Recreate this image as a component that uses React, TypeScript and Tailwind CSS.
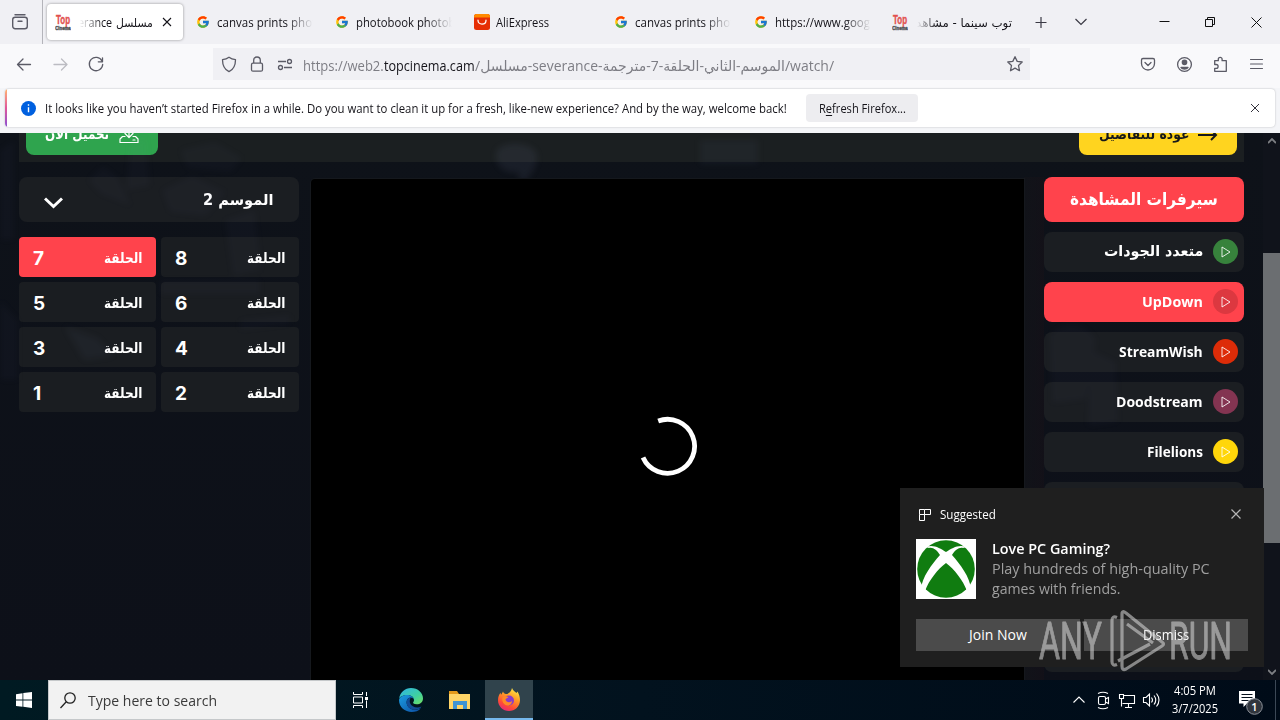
import { useLayoutEffect, useRef } from "react";
import type { ReactNode } from "react";
import { FcGoogle } from "react-icons/fc";

/** One line of text, stretched horizontally to fill the width given by its class. */
function Fit({ className, rtl, children }: { className: string; rtl?: boolean; children: ReactNode }) {
  const box = useRef<HTMLDivElement>(null);
  const line = useRef<HTMLSpanElement>(null);
  useLayoutEffect(() => {
    if (!box.current || !line.current) return;
    const k = box.current.clientWidth / line.current.offsetWidth;
    line.current.style.transform = `scaleX(${k})`;
  }, []);
  return (
    <div ref={box} dir="ltr" className={`flex shrink-0 whitespace-nowrap ${className}`}>
      <span ref={line} dir={rtl ? "rtl" : "ltr"} className="block shrink-0 origin-left">
        {children}
      </span>
    </div>
  );
}

const ARABIC = "font-['DejaVu_Sans',sans-serif]";

function TopCinemaIcon() {
  return (
    <svg width="16" height="17" viewBox="0 0 16 17" className="shrink-0">
      <text x="1" y="10" textLength="14" lengthAdjust="spacingAndGlyphs" fontFamily="Liberation Sans" fontWeight="700" fontSize="12" stroke="#e2504e" strokeWidth=".4" fill="#e2504e">Top</text>
      <text x="0.3" y="15.5" textLength="15.4" lengthAdjust="spacingAndGlyphs" fontFamily="Liberation Sans" fontWeight="700" fontSize="6" stroke="#55565c" strokeWidth=".5" fill="#55565c">Cinema</text>
    </svg>
  );
}

function GoogleIcon() {
  return <span className="flex w-4 shrink-0 justify-center"><FcGoogle size={14} /></span>;
}

function Tab({ icon, children }: { icon: ReactNode; children: ReactNode }) {
  return (
    <div className="flex h-9 w-[139.4px] shrink-0 items-center gap-1.5 pl-[9px]">
      {icon}
      <div className="w-24 overflow-hidden pt-0.5 [mask-image:linear-gradient(to_right,black_72%,transparent_100%)]">{children}</div>
    </div>
  );
}

function TabStrip() {
  return (
    <div className="flex h-11 items-center bg-[#f0f0f4] text-[12px] leading-5 text-[#15141a]">
      <div className="flex h-11 w-[43px] shrink-0 items-center justify-center border-r border-[#b4b4ba] pr-0.5">
        <svg width="18" height="18" viewBox="0 0 18 18" fill="none" stroke="#5b5b66" strokeWidth="1.4" strokeLinecap="round">
          <path d="M4 1.7h10" />
          <rect x="1.7" y="4.2" width="14.6" height="11.6" rx="2.5" />
          <path d="M7 8.3h4" />
        </svg>
      </div>
      <div className="ml-1 flex h-9 w-[136px] shrink-0 items-center rounded bg-white pl-2 shadow-[0_0_3px_rgba(0,0,0,0.4)]">
        <TopCinemaIcon />
        <div className="ml-[7px] flex items-center justify-end pt-0.5 [mask-image:linear-gradient(to_right,transparent_2%,black_32%)]">
          <Fit className="w-[34px]">erance</Fit>
          <Fit rtl className={`ml-1 w-[37px] ${ARABIC}`}>مسلسل</Fit>
        </div>
        <svg width="10" height="10" viewBox="0 0 10 10" className="ml-[9px] shrink-0" stroke="#15141a" strokeWidth="1.1"><path d="M1 1l8 8M9 1L1 9" /></svg>
      </div>
      <div className="ml-[3px] flex shrink-0">
        <Tab icon={<GoogleIcon />}><Fit className="w-[99px]">canvas prints phot</Fit></Tab>
        <Tab icon={<GoogleIcon />}><Fit className="w-[99px]">photobook photob</Fit></Tab>
        <Tab
          icon={
            <svg width="16" height="16" viewBox="0 0 16 16" className="shrink-0">
              <rect width="16" height="16" rx="2.5" fill="#e62e04" />
              <path d="M0 3.500v-1A2.500 2.500 0 0 1 2.500 0h11A2.500 2.500 0 0 1 16 2.500v1z" fill="#ff8a00" />
              <path d="M4 6.200c0 5.200 8 5.200 8 0" fill="none" stroke="#fff" strokeWidth="1.300" strokeLinecap="round" />
            </svg>
          }
        >
          <Fit className="w-[53px]">AliExpress</Fit>
        </Tab>
        <Tab icon={<GoogleIcon />}><Fit className="w-[99px]">canvas prints phot</Fit></Tab>
        <Tab icon={<GoogleIcon />}><Fit className="w-[104px]">https://www.google</Fit></Tab>
        <div className="flex h-9 w-[139px] items-center gap-2 pl-[9px]">
          <TopCinemaIcon />
          <div className="pt-0.5 [mask-image:linear-gradient(to_right,transparent_1%,black_22%)]">
            <Fit rtl className={`w-24 ${ARABIC}`}>توب سينما - مشاهد</Fit>
          </div>
        </div>
      </div>
      <svg width="250" height="44" viewBox="1022 0 250 44" className="-ml-px shrink-0" fill="none" stroke="#3a3944" strokeWidth="1.200">
        <path d="M1036.500 22.500h11M1042 17v11" />
        <path d="M1076.500 19l5.500 5.500 5.500-5.500" />
        <g stroke="#111" strokeWidth="1">
          <path d="M1160.500 21.500h10" />
          <path d="M1206.500 19.500h7v7h-7zM1208.500 19.500v-2h7v7h-2" />
          <path d="M1252.500 17.500l10 10M1262.500 17.500l-10 10" />
        </g>
      </svg>
    </div>
  );
}

function NavBar() {
  return (
    <div className="flex h-11 items-start bg-[#f9f9fb] pt-1">
      <svg width="213" height="32" viewBox="0 48 213 32" className="shrink-0" fill="none" stroke="#5b5b66" strokeWidth="1.300" strokeLinecap="round" strokeLinejoin="round">
        <path d="M30.500 64.500H17.500M23 59l-5.500 5.500 5.500 5.500" />
        <path d="M54 64.500h13M61.500 59l5.500 5.500-5.500 5.500" stroke="#bcbcc2" />
        <path d="M102 61a6.700 6.700 0 1 0 .7 3.500M102.500 57.800v4h-4.200" />
      </svg>
      <div className="flex h-8 w-[817px] shrink-0 items-center bg-[#f0f0f4] text-[14px] text-[#7d7d84]">
        <svg width="90" height="32" viewBox="213 48 90 32" className="shrink-0" fill="none" stroke="#5b5b66" strokeWidth="1.300" strokeLinejoin="round">
          <path d="M229 57.200c2 1.500 4.300 2.200 6.500 2.500 0 5.500-1.500 9.500-6.500 12-5-2.500-6.500-6.500-6.500-12 2.200-.3 4.500-1 6.500-2.500z" />
          <rect x="251.500" y="63.200" width="11" height="8" rx="1.500" />
          <path d="M253.700 63v-2.700a3.300 3.300 0 0 1 6.600 0V63" />
          <path d="M278 61.500h8M284 67.500h8" />
          <circle cx="289.500" cy="61.500" r="2" />
          <circle cx="280.500" cy="67.500" r="2" />
        </svg>
        <Fit className="w-[81px] pt-0.5">https://web2.</Fit>
        <Fit className="w-[91px] pt-0.5 text-[#15141a]">topcinema.cam</Fit>
        <Fit className="w-[359px] pt-0.5 font-['Open_Sans','DejaVu_Sans',sans-serif]">/مسلسل-severance-الموسم-الثاني-الحلقة-7-مترجمة/watch/</Fit>
        <svg width="18" height="18" viewBox="0 0 18 18" className="ml-[172px] shrink-0" fill="none" stroke="#5b5b66" strokeWidth="1.300" strokeLinejoin="round">
          <path d="M9 1.700l2.200 4.700 5 .6-3.700 3.500 1 5.200L9 13.100l-4.500 2.600 1-5.200L1.800 7l5-.6z" />
        </svg>
      </div>
      <svg width="130" height="32" viewBox="1138 48 130 32" className="ml-[108px] shrink-0" fill="none" stroke="#5b5b66" strokeWidth="1.300" strokeLinecap="round" strokeLinejoin="round">
        <path d="M1143 58.500h10a1.500 1.500 0 0 1 1.500 1.500v3.500a6.500 6.500 0 0 1-13 0V60a1.500 1.500 0 0 1 1.500-1.500zM1145 62.500l3 3 3-3" />
        <circle cx="1184.500" cy="64.500" r="6.900" />
        <circle cx="1184.500" cy="62.300" r="2.200" fill="#5b5b66" />
        <path d="M1181 67.500h7c-1.500 2-5.500 2-7 0z" fill="#5b5b66" />
        <path d="M1214.700 60.700h3.600v-1.500a1.900 1.900 0 0 1 3.800 0v1.500h4.200v10.600h-11.600v-3h1.500a1.900 1.900 0 0 0 0-3.800h-1.500z" />
        <path d="M1250.500 59.500h12M1250.500 64h12M1250.500 68.500h12" strokeWidth="1.100" />
      </svg>
    </div>
  );
}

function InfoBar() {
  return (
    <div className="h-[45px] bg-[#f4f5f8] px-[5px] pt-px">
      <div className="flex h-[38px] items-center overflow-hidden rounded bg-white text-[12px] text-[#15141a] shadow-[0_0_2px_rgba(0,0,0,0.25)]">
        <div className="h-full w-0.5 bg-linear-to-b from-[#ffb26b] via-[#e0559a] to-[#8b4cd0]" />
        <svg width="15" height="15" viewBox="0 0 15 15" className="ml-[14px] shrink-0">
          <circle cx="7.500" cy="7.500" r="7.500" fill="#0060df" />
          <path d="M7.500 3.200v1.500M7.500 6.300v5" stroke="#fff" strokeWidth="1.400" />
        </svg>
        <Fit className="ml-[9px] w-[742px] pt-px">It looks like you haven’t started Firefox in a while. Do you want to clean it up for a fresh, like-new experience? And by the way, welcome back!</Fit>
        <div className="ml-[19px] flex h-7 w-28 items-center justify-center rounded-sm bg-[#ededf0]">
          <Fit className="w-[87px] pt-px">R<span className="underline underline-offset-2">e</span>fresh Firefox...</Fit>
        </div>
        <svg width="8" height="8" viewBox="0 0 8 8" className="ml-auto mr-4" stroke="#33323c"><path d="M0 0l8 8M8 0L0 8" /></svg>
      </div>
    </div>
  );
}

const episodes = [7, 8, 5, 6, 3, 4, 1, 2];

function Seasons() {
  return (
    <div className="w-[280px] shrink-0">
      <div className="flex h-[45px] items-center justify-between rounded-lg bg-[#1b1e22] pl-[25px] pr-[26px]">
        <svg width="19" height="12" viewBox="0 0 19 12" className="mt-1.5" fill="none" stroke="#fff" strokeWidth="3"><path d="M1 1.500l8.500 8 8.500-8" /></svg>
        <Fit rtl className={`w-[70px] pt-px text-[15px] font-bold text-white ${ARABIC}`}>الموسم 2</Fit>
      </div>
      <div className="mt-[15px] grid grid-cols-[137px_138px] gap-[5px]">
        {episodes.map((n) => (
          <div key={n} className={`flex h-10 items-center justify-between rounded pl-3.5 pr-3.5 text-white ${n === 7 ? "bg-[#ff434c]" : "bg-[#1a1d21]"}`}>
            <span className="pt-[3px] font-['Inter',sans-serif] text-[19px] font-bold leading-none">{n}</span>
            <Fit rtl className={`w-[38px] pt-[3px] text-[14px] font-bold ${ARABIC}`}>الحلقة</Fit>
          </div>
        ))}
      </div>
    </div>
  );
}

const servers = [
  { name: "متعدد الجودات", width: "w-[99px]", circle: "bg-[#37823c]", arabic: true },
  { name: "UpDown", width: "w-[61px]", circle: "bg-[#dc3840]", active: true },
  { name: "StreamWish", width: "w-[84px]", circle: "bg-[#dd2c08]" },
  { name: "Doodstream", width: "w-[87px]", circle: "bg-[#833451]" },
  { name: "Filelions", width: "w-[56px]", circle: "bg-[#ffd60a]" },
];

function Servers() {
  return (
    <div className="flex w-[200px] shrink-0 flex-col gap-2.5">
      <div className="flex h-[45px] shrink-0 items-center justify-center rounded-lg bg-[#ff434c] text-[17px] text-white">
        <Fit rtl className={`w-[148px] font-bold ${ARABIC}`}>سيرفرات المشاهدة</Fit>
      </div>
      {servers.map((s) => (
        <div key={s.name} className={`flex h-10 shrink-0 items-center justify-end gap-2.5 rounded-lg pb-px pr-1.5 text-[15px] font-bold text-white ${s.active ? "bg-[#ff434c]" : "bg-[#1b1e22]"}`}>
          {s.arabic ? <Fit rtl className={`${s.width} ${ARABIC}`}>{s.name}</Fit> : <Fit className={s.width}>{s.name}</Fit>}
          <span className={`flex size-[25px] items-center justify-center rounded-full ${s.circle}`}>
            <svg width="10" height="12" viewBox="0 0 10 12" fill="none" stroke="#fff" strokeOpacity=".85"><path d="M1 1l8 5-8 5z" /></svg>
          </span>
        </div>
      ))}
      {[0, 1, 2, 3].map((i) => <div key={i} className="h-10 shrink-0 rounded-lg bg-[#1b1e22]" />)}
    </div>
  );
}

function Backdrop() {
  return (
    <svg width="1263" height="547" viewBox="0 133 1263 547" className="pointer-events-none absolute left-0 top-0 blur-[3px]" fill="#7d86b0" fillOpacity=".03">
      <path d="M88 180l15-14 14 10 14 30-30-12zM162 190l30-14 34 16-20 24-36-4zM180 150l35-8 28 16-12 14-44-4z" />
      <path d="M497 150c8-10 42-8 40 8 0 10-8 18-14 26l-6-12c-14 2-24-8-20-22z" fillOpacity=".1" />
      <path d="M700 140h58v24h-58zM64 326l34 12 16 18-30 4z" fillOpacity=".06" />
      <path d="M1050 335c14-16 34-14 46 4l-10 60-34 4zM1090 350l26 12 2 60-30 4z" />
      <path d="M225 220l30-10 6 60-28 6zM160 280h100v14H160zM130 146l16-10 4 50-24 4zM240 320l50-5v9l-50 6z" />
      <path d="M0 150l14-10v100H0zM0 300l18 20v60H0z" />
    </svg>
  );
}

function Page() {
  return (
    <div className="flex h-[547px]">
      <div className="relative h-[547px] w-[1263px] shrink-0 overflow-hidden bg-linear-to-b from-[#0e1219] to-[#0d1019] pl-[19px]">
        <div className="-mt-5 flex h-[49px] w-[1225px] items-end justify-between bg-[#1b1f21] px-[7px] pb-[7px]">
          <div className="flex h-10 w-[132px] items-center rounded-lg bg-[#2fa44e] pl-[19px] text-white">
            <Fit rtl className={`w-[64px] pb-0.5 text-[14px] font-bold ${ARABIC}`}>تحميل الآن</Fit>
            <svg width="20" height="18" viewBox="0 0 20 18" className="ml-2.5" fill="none" stroke="#fff" strokeWidth="1.200" strokeLinecap="round" strokeLinejoin="round">
              <path d="M10 1v10M6 7.500l4 4 4-4M6 10.500H3.500L1 13v3.500h18V13l-2.500-2.500H14M14 14h2" />
            </svg>
          </div>
          <div className="flex h-10 w-[158px] items-center rounded-lg bg-[#ffd41f] pl-5 text-[#16181a]">
            <Fit rtl className={`w-[90px] pb-0.5 text-[14px] font-bold ${ARABIC}`}>عودة للتفاصيل</Fit>
            <svg width="20" height="12" viewBox="0 0 20 12" className="ml-[9px]" fill="none" stroke="#16181a" strokeWidth="2"><path d="M0 6h18M13 1l5 5-5 5" /></svg>
          </div>
        </div>
        <div className="flex pt-[15px]">
          <Seasons />
          <div className="relative z-10 ml-3 mt-0.5 flex h-[520px] w-[713px] shrink-0 items-start justify-center rounded-tl bg-black shadow-[0_0_0_1px_#15181d]">
            <svg width="60" height="60" viewBox="-30 -30 60 60" className="mt-[237px]" fill="none" stroke="#fff" strokeWidth="4.800">
              <path d="M-9.800 -25A27 27 0 1 1 -25 11.500" />
            </svg>
          </div>
          <div className="w-5 shrink-0 bg-linear-to-r from-[#111319] to-[#1a1117]/40" />
          <Servers />
        </div>
        <Backdrop />
      </div>
      <div className="flex w-[17px] flex-col items-center justify-between bg-[#10131b] pt-[5px] pb-[5px]">
        <svg width="8" height="6" viewBox="0 0 8 6" fill="none" stroke="#7d7f83" strokeWidth="1.800"><path d="M0 5l4-4 4 4" /></svg>
        <div className="mt-[109px] h-[290px] w-full shrink-0 bg-[#6b6e71]" />
        <svg width="8" height="6" viewBox="0 0 8 6" className="mt-auto" fill="none" stroke="#7d7f83" strokeWidth="1.800"><path d="M0 1l4 4 4-4" /></svg>
      </div>
    </div>
  );
}

function Taskbar() {
  return (
    <div className="flex h-10 items-center bg-linear-to-r from-[#001a22] via-[#02121e] to-[#000b18] text-white">
      <div className="flex w-12 shrink-0 justify-center">
        <svg width="16" height="16" viewBox="0 0 16 16" fill="#fff"><path d="M0 2.200l6.500-1v6.400H0zM7.300 1.100L16 0v7.600H7.300zM0 8.400h6.500v6.400L0 13.900zM7.300 8.400H16V16l-8.700-1.200z" /></svg>
      </div>
      <div className="flex h-10 w-72 shrink-0 items-center border border-[#c5c8ca] bg-[#f2f2f2] pl-[11px]">
        <svg width="16" height="17" viewBox="0 0 16 17" fill="none" stroke="#222" strokeWidth="1.300"><circle cx="10" cy="6" r="5.200" /><path d="M6.300 9.800L.5 16" /></svg>
        <Fit className="ml-3 w-[129px] text-[15px] text-[#3a3a3a]">Type here to search</Fit>
      </div>
      <div className="flex w-12 shrink-0 justify-center">
        <svg width="16" height="16" viewBox="0 0 16 16" fill="none" stroke="#fff"><path d="M1.500 0v2.500h9V0M1.500 16v-2.500h9V16M1.500 5h9v6h-9zM14.500 0v4M14.500 8.500V16" /><path d="M13 5h3v3h-3z" fill="#fff" stroke="none" /></svg>
      </div>
      <div className="flex w-[53px] shrink-0 justify-center">
        <svg width="24" height="24" viewBox="0 0 24 24">
          <defs>
            <linearGradient id="edgeTop" x1="0" y1="0" x2="1" y2="1"><stop stopColor="#2fb4e8" /><stop offset=".6" stopColor="#3fd0a0" /><stop offset="1" stopColor="#73e060" /></linearGradient>
            <linearGradient id="edgeBody" x1="0" y1="0" x2="1" y2="1"><stop stopColor="#1b9de2" /><stop offset="1" stopColor="#0c4da2" /></linearGradient>
          </defs>
          <path d="M.2 10.500C1 4.500 6 0 12 0c7 0 12 5 12 10.200 0 4-3 6-6.300 6-3 0-4-1.200-3.500-2 .6-.7.800-1.300.8-2.200 0-2.500-2.500-5-6.500-5C4.500 7 1.300 8.500.2 10.500z" fill="url(#edgeTop)" />
          <path d="M.1 11.500C1 8.500 4.500 7 8 7c3.500 0 6.500 2 6.900 4.500-.7-1.200-1.700-2-3.300-2-2.600 0-4 2.400-4 4.700 0 4.300 4 7.600 8.400 7.600 2.300 0 4.300-.6 6-1.800-2.300 3-5.800 4-9.300 4C5.500 24-.6 18.500.1 11.500z" fill="url(#edgeBody)" />
          <path d="M7.600 14.500c0 4.300 4 7.300 8.400 7.300 3.500 0 5.500-1.600 6.500-3.300-4 2-10 .8-11.500-3.500-.6-2 0-4 .8-5.400-2.700 0-4.200 2.500-4.200 4.900z" fill="#124c96" />
        </svg>
      </div>
      <div className="flex w-12 shrink-0 justify-center pr-1.5">
        <svg width="22" height="20" viewBox="0 0 22 20" className="ml-1">
          <path d="M0 1h8l2 3H0z" fill="#e49a1a" />
          <path d="M0 4h21v15H0z" fill="#ffd567" />
          <path d="M4 11h14v8h-4v-4H8v4H4z" fill="#3f94d4" />
        </svg>
      </div>
      <div className="flex h-10 w-12 shrink-0 items-center justify-center border-b-2 border-[#76b9ed] bg-[#30434c]">
        <svg width="22" height="23" viewBox="0 0 22 23">
          <defs><linearGradient id="fox" x1=".8" y1="0" x2=".3" y2="1"><stop stopColor="#fff04a" /><stop offset=".4" stopColor="#ff9b25" /><stop offset=".75" stopColor="#ff4b35" /><stop offset="1" stopColor="#e72a78" /></linearGradient></defs>
          <path d="M14 0c1 2.500 3 3.500 4.500 5l1-1.500C21 6 22 9 22 12c0 6.500-5 11-11 11S0 18.500 0 12.300C0 9 1 6.500 2.500 4.800l.5 2C4 5.500 4.500 4.500 5 3.500c.5 1.500 1.500 2.300 3 2.500 2 .2 2-.5 3.500-1.500C12.500 3.500 13.500 2 14 0z" fill="url(#fox)" />
          <circle cx="11" cy="12.500" r="5" fill="#8a3cc8" />
          <path d="M4.500 9.500c2-1.800 4.500-1.500 6-.3-1 1-2.500 1-3 2.300.8 3 4 3.500 6.500 1.500 0 3-2 4.500-4.500 4.500-3.500 0-6-4-5-8z" fill="#ff8a26" />
        </svg>
      </div>
      <svg width="100" height="40" viewBox="1066 680 100 40" className="ml-[533px] shrink-0" fill="none" stroke="#fff" strokeWidth="1.100">
        <path d="M1073.500 702.500l5.500-5.500 5.500 5.500" />
        <rect x="1098.500" y="696.500" width="7" height="8" rx="1.500" />
        <path d="M1105.500 699l3-1.500v6l-3-1.500M1098 693.500q5-2.500 10 0M1098 707.500q5 2.500 10 0" />
        <path d="M1123.500 695.500h11v8h-12M1128.500 703.500v3.500M1125 707.500h7M1119.500 694.500h4v4h-4zM1121.500 698.500v8" />
        <path d="M1143.500 697.500h2.500l3.500-3.500v12l-3.500-3.500h-2.500zM1151.500 697.500q2 2.500 0 5M1154 695.500q3.500 4.500 0 9M1156.500 693.500q5 6.500 0 13" />
      </svg>
      <div className="ml-1 flex w-[50px] shrink-0 flex-col items-center text-[12px] leading-[18px]">
        <Fit className="w-[42px]">4:05 PM</Fit>
        <Fit className="w-[46px]">3/7/2025</Fit>
      </div>
      <svg width="28" height="28" viewBox="0 0 28 28" className="ml-[18px] mt-1.5 shrink-0">
        <path d="M1 2h16v12.500H9L5.500 18v-3.500H1z" fill="#fff" />
        <path d="M3.500 5.500h11M3.500 8.500h11M3.500 11.500h7" stroke="#05101c" />
        <circle cx="16.500" cy="17.500" r="7.800" fill="#30353d" stroke="#8b9098" />
        <text x="16.500" y="21.500" textAnchor="middle" fontFamily="Open Sans" fontWeight="600" fontSize="11" fill="#fff">1</text>
      </svg>
      <div className="ml-auto mr-1 h-10 w-px bg-[#3c4856]" />
    </div>
  );
}

function Toast() {
  return (
    <div className="absolute left-[900px] top-[488px] z-20 h-[179px] w-[364px] bg-[#1f1f1f] px-4 text-white">
      <div className="flex h-[51px] items-center pt-0.5">
        <svg width="12" height="12" viewBox="0 0 12 12" className="ml-[3px]" fill="none" stroke="#fff"><path d="M.5.5h5v5h-5zM5.500.5h6v5h-6M.5 5.500v6h5v-6h3" /></svg>
        <Fit className="ml-[9px] w-14 pt-px text-[12px]">Suggested</Fit>
        <svg width="10" height="10" viewBox="0 0 10 10" className="mb-0.5 ml-auto mr-[7px]" stroke="#b5b5b5" strokeWidth="1.200"><path d="M.5.500l9 9M9.500.500l-9 9" /></svg>
      </div>
      <div className="flex gap-4">
        <svg width="60" height="60" viewBox="0 0 60 60">
          <path d="M0 0h60v60H0z" fill="#fff" />
          <circle cx="30" cy="30" r="28.800" fill="#107c10" />
          <path d="M10 8c7-3 14 1 20 5 6-4 13-8 20-5l-3 1c-4-1-8 2-11 7 8 9 18 22 19 34l-4 2C47 41 38 30 30 24 22 30 13 41 9 52l-4-2c1-12 11-25 19-34-3-5-7-8-11-7z" fill="#fff" />
        </svg>
        <div className="text-[14px] leading-5">
          <Fit className="w-[118px] font-semibold">Love PC Gaming?</Fit>
          <Fit className="w-[218px] text-[#a0a0a0]">Play hundreds of high-quality PC</Fit>
          <Fit className="w-32 text-[#a0a0a0]">games with friends.</Fit>
        </div>
      </div>
      <div className="mt-5 grid grid-cols-2 gap-1 text-[14px]">
        <div className="flex h-8 items-center justify-center bg-[#4b4b4b] pb-px"><Fit className="w-[58px]">Join Now</Fit></div>
        <div className="flex h-8 items-center justify-center bg-[#4b4b4b] pb-px"><Fit className="w-[46px]">Dismiss</Fit></div>
      </div>
    </div>
  );
}

function Watermark() {
  return (
    <svg width="200" height="66" viewBox="1036 608 200 66" className="absolute left-[1036px] top-[608px] z-30 opacity-55" fill="none" stroke="#dcdcdc" strokeWidth="3.200" strokeLinejoin="round">
      <g fill="#dcdcdc" strokeWidth=".9" fontFamily="Roboto" fontWeight="400" fontSize="52">
        <text x="1039" y="659" textLength="63" lengthAdjust="spacingAndGlyphs">ANY</text>
        <text x="1169" y="659" textLength="63" lengthAdjust="spacingAndGlyphs">RUN</text>
      </g>
      <path d="M1117 617.500q-5-2-5 3v41q0 5 5 3" />
      <path d="M1122 614v52q0 5 4 3l36-23q3-2 0-4l-36-29q-4-3-4 1z" />
      <path d="M1127 624l26 19M1118 661l32-17" />
    </svg>
  );
}

export default function App() {
  return (
    <div className="relative h-[720px] w-[1280px] overflow-hidden bg-black font-['Open_Sans','DejaVu_Sans',sans-serif]">
      <TabStrip />
      <NavBar />
      <InfoBar />
      <Page />
      <Taskbar />
      <Toast />
      <Watermark />
    </div>
  );
}
